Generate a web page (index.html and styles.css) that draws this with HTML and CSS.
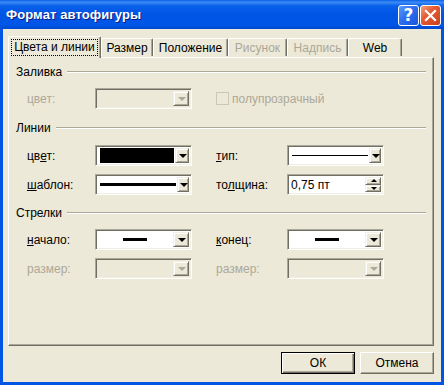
FILE: index.html
```html
<!DOCTYPE html>
<html lang="ru">
<head>
    <meta charset="UTF-8">
    <title>Формат автофигуры</title>
    <link rel="stylesheet" href="styles.css">
</head>
<body>
    <div class="window">
        <div class="titlebar">
            <span class="title">Формат автофигуры</span>
            <div class="caption-buttons">
                <span class="cap-btn help">?</span>
                <span class="cap-btn close">
                    <svg width="13" height="13" viewBox="0 0 13 13"><path d="M2 2 L11 11 M11 2 L2 11" stroke="#fff" stroke-width="2.2" stroke-linecap="square"/></svg>
                </span>
            </div>
        </div>

        <div class="client">
            <div class="tabs">
                <div class="tab active t1"><span class="focus">Цвета и линии</span></div>
                <div class="tab t2">Размер</div>
                <div class="tab t3">Положение</div>
                <div class="tab t4 disabled">Рисунок</div>
                <div class="tab t5 disabled">Надпись</div>
                <div class="tab t6">Web</div>
            </div>

            <div class="panel">
                <!-- Заливка -->
                <section class="group g1">
                    <div class="group-head"><span>Заливка</span><i class="rule"></i></div>
                    <div class="fields">
                        <label class="lbl disabled">цвет:</label>
                        <div class="combo disabled"><div class="value"></div><span class="drop"><i class="arrow"></i></span></div>
                        <div class="check-wrap disabled">
                            <span class="checkbox"></span>
                            <span>полупрозрачный</span>
                        </div>
                    </div>
                </section>

                <!-- Линии -->
                <section class="group g2">
                    <div class="group-head"><span>Линии</span><i class="rule"></i></div>
                    <div class="fields">
                        <label class="lbl">цв<u>е</u>т:</label>
                        <div class="combo"><div class="value"><span class="fill-black"></span></div><span class="drop"><i class="arrow"></i></span></div>
                        <label class="lbl lbl2"><u>т</u>ип:</label>
                        <div class="combo"><div class="value"><span class="line thin"></span></div><span class="drop"><i class="arrow"></i></span></div>

                        <label class="lbl"><u>ш</u>аблон:</label>
                        <div class="combo"><div class="value"><span class="line thick"></span></div><span class="drop"><i class="arrow"></i></span></div>
                        <label class="lbl lbl2">то<u>л</u>щина:</label>
                        <div class="combo spin"><div class="value text">0,75 пт</div>
                            <span class="spin-btns">
                                <span class="spin-btn"><i class="arrow up"></i></span>
                                <span class="spin-btn"><i class="arrow"></i></span>
                            </span>
                        </div>
                    </div>
                </section>

                <!-- Стрелки -->
                <section class="group g3">
                    <div class="group-head"><span>Стрелки</span><i class="rule"></i></div>
                    <div class="fields">
                        <label class="lbl"><u>н</u>ачало:</label>
                        <div class="combo"><div class="value center"><span class="line short"></span></div><span class="drop"><i class="arrow"></i></span></div>
                        <label class="lbl lbl2"><u>к</u>онец:</label>
                        <div class="combo"><div class="value center"><span class="line short"></span></div><span class="drop"><i class="arrow"></i></span></div>

                        <label class="lbl disabled">размер:</label>
                        <div class="combo disabled"><div class="value"></div><span class="drop"><i class="arrow"></i></span></div>
                        <label class="lbl lbl2 disabled">размер:</label>
                        <div class="combo disabled"><div class="value"></div><span class="drop"><i class="arrow"></i></span></div>
                    </div>
                </section>
            </div>

            <div class="actions">
                <button class="btn default">ОК</button>
                <button class="btn">Отмена</button>
            </div>
        </div>
    </div>
</body>
</html>
```

FILE: styles.css
```css
body {
    margin: 0;
    font-family: "Liberation Sans", Arial, sans-serif;
    font-size: 12px;
    color: #000;
    background: #0055e5;
}

.window {
    width: 444px;
    height: 385px;
    background: #0055e5;
    display: flex;
    flex-direction: column;
    overflow: hidden;
}

/* title bar */
.titlebar {
    height: 29px;
    flex: none;
    display: flex;
    align-items: center;
    justify-content: space-between;
    background: linear-gradient(to bottom, #0a5fe8 0%, #3c8cf5 8%, #0860ea 20%, #0055e5 50%, #0056e8 85%, #0049cf 100%);
    padding: 0 3px 0 6px;
}

.title {
    color: #fff;
    font-weight: bold;
    font-size: 13px;
    text-shadow: 1px 1px 0 #0a1c86;
    letter-spacing: 0.1px;
}

.caption-buttons {
    display: flex;
    gap: 1px;
    margin-top: 1px;
}

.cap-btn {
    width: 19px;
    height: 19px;
    border: 1px solid #fff;
    border-radius: 3px;
    display: flex;
    align-items: center;
    justify-content: center;
    color: #fff;
}

.help {
    background: linear-gradient(135deg, #5d9bf9 0%, #2c6ff0 45%, #1a55dd 100%);
    font-family: "DejaVu Sans", sans-serif;
    font-size: 17px;
    font-weight: bold;
    line-height: 1;
}

.close {
    background: linear-gradient(135deg, #f2a07a 0%, #e45a35 40%, #c8401c 100%);
}

/* client area */
.client {
    flex: 1;
    margin: 0 3px 3px;
    background: #ece9d8;
    display: flex;
    flex-direction: column;
}

.tabs {
    display: flex;
    align-items: flex-end;
    height: 22px;
    margin: 6px 0 0 5px;
    position: relative;
    z-index: 1;
}

.tab {
    height: 18px;
    box-sizing: border-box;
    border-top: 1px solid #fff;
    border-left: 1px solid #fff;
    border-right: 1px solid #716f64;
    box-shadow: inset -1px 0 0 #aca899;
    border-radius: 2px 2px 0 0;
    display: flex;
    align-items: center;
    justify-content: center;
    margin-bottom: 1px;
}

.tab.active {
    height: 22px;
    margin-bottom: -1px;
    background: #ece9d8;
}

.tab.disabled { color: #aca899; }

.t1 { width: 93px; }
.t2 { width: 52px; }
.t3 { width: 75px; }
.t4 { width: 59px; }
.t5 { width: 61px; }
.t6 { width: 54px; }

.focus {
    outline: 1px dotted #000;
    padding: 0 2px;
    line-height: 15px;
}

/* tab panel */
.panel {
    width: 426px;
    height: 289px;
    margin-left: 5px;
    box-sizing: border-box;
    border-top: 1px solid #fff;
    border-left: 1px solid #fff;
    border-right: 1px solid #716f64;
    border-bottom: 1px solid #716f64;
    box-shadow: inset -1px -1px 0 #aca899;
    padding: 0 7px;
}

.group-head {
    display: flex;
    align-items: center;
    height: 14px;
    gap: 5px;
}

.rule {
    flex: 1;
    height: 0;
    border-top: 1px solid #aca899;
    border-bottom: 1px solid #fff;
}

.g1 .group-head { margin-top: 7px; }
.g2 .group-head { margin-top: 12px; }
.g3 .group-head { margin-top: 11px; }

.g1 .fields, .g3 .fields { margin-top: 9px; }
.g2 .fields { margin-top: 10px; }

.fields {
    margin-left: 11px;
    display: grid;
    grid-template-columns: 68px 97px 24px 71px 97px;
    grid-auto-rows: 21px;
    row-gap: 8px;
    align-items: center;
}

.lbl { grid-column: 1; }
.lbl2 { grid-column: 4; }
.disabled { color: #aca899; }

/* combo boxes */
.combo {
    height: 21px;
    box-sizing: border-box;
    border: 1px solid;
    border-color: #aca899 #fff #fff #aca899;
    box-shadow: inset 1px 1px 0 #716f64, inset -1px -1px 0 #f1efe2;
    background: #fff;
    display: flex;
    padding: 2px 2px 2px 2px;
    gap: 1px;
}

.combo.disabled { background: #ece9d8; }

.value {
    flex: 1;
    display: flex;
    align-items: center;
    padding-left: 2px;
}

.value.center { justify-content: center; padding-left: 0; }
.value.text { padding-left: 1px; }

.fill-black {
    display: block;
    width: 74px;
    height: 15px;
    background: #000;
    margin-left: 0;
}

.line { display: block; background: #000; }
.line.thin { width: 76px; height: 1px; }
.line.thick { width: 76px; height: 3px; }
.line.short { width: 24px; height: 3px; }

.drop, .spin-btn {
    width: 16px;
    box-sizing: border-box;
    background: #ece9d8;
    border: 1px solid;
    border-color: #f1efe2 #716f64 #716f64 #f1efe2;
    box-shadow: inset 1px 1px 0 #fff, inset -1px -1px 0 #aca899;
    display: flex;
    align-items: center;
    justify-content: center;
}

.arrow {
    width: 0;
    height: 0;
    border-left: 4px solid transparent;
    border-right: 4px solid transparent;
    border-top: 4px solid #000;
    margin-left: 1px;
}

.arrow.up {
    border-top: none;
    border-bottom: 4px solid #000;
}

.disabled .arrow { border-top-color: #aca899; }

.spin-btns {
    width: 16px;
    display: flex;
    flex-direction: column;
}

.spin-btn { height: 8px; width: 16px; }
.spin-btn .arrow { border-left-width: 3px; border-right-width: 3px; border-top-width: 3px; }
.spin-btn .arrow.up { border-bottom-width: 3px; }

.check-wrap {
    grid-column: 4 / 6;
    display: flex;
    align-items: center;
    gap: 3px;
}

.checkbox {
    width: 13px;
    height: 13px;
    box-sizing: border-box;
    border: 1px solid #cac8bb;
    background: #ece9d8;
}

/* buttons */
.actions {
    display: flex;
    justify-content: flex-end;
    gap: 5px;
    margin: 6px 7px 0 0;
}

.btn {
    width: 74px;
    height: 22px;
    font-family: "Liberation Sans", Arial, sans-serif;
    font-size: 12px;
    color: #000;
    background: #ece9d8;
    border: 1px solid;
    border-color: #fff #716f64 #716f64 #fff;
    box-shadow: inset -1px -1px 0 #aca899;
    padding: 0;
}

.btn.default {
    border: 1px solid #000;
    box-shadow: inset 1px 1px 0 #fff, inset -1px -1px 0 #716f64, inset -2px -2px 0 #aca899;
}
```
